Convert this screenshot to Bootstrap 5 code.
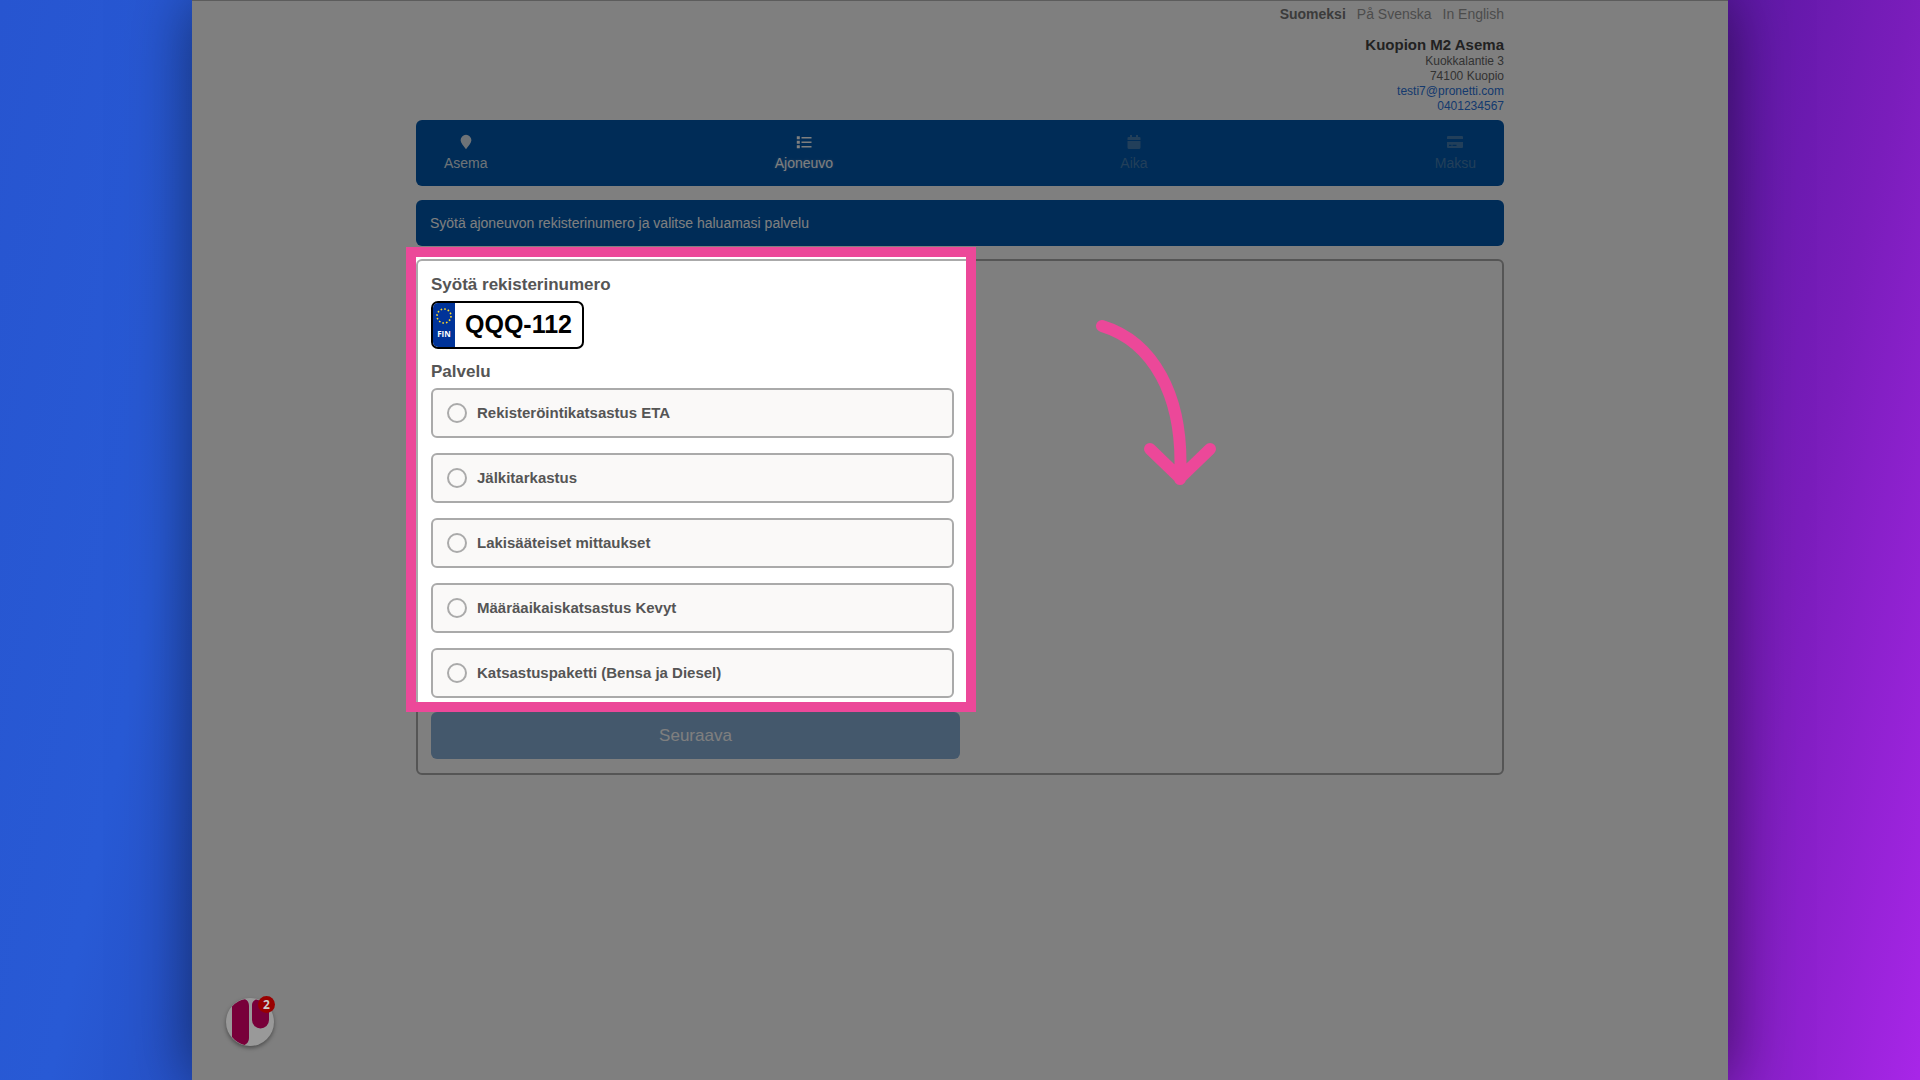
<!DOCTYPE html>
<html lang="fi">
<head>
<meta charset="utf-8">
<meta name="viewport" content="width=device-width, initial-scale=1">
<title>Kuopion M2 Asema – ajanvaraus</title>
<link href="https://cdn.jsdelivr.net/npm/bootstrap@5.3.0/dist/css/bootstrap.min.css" rel="stylesheet">
<style>
  body { font-family: "Liberation Sans", Arial, sans-serif; color: #555; font-size: 14px; background: linear-gradient(102deg, #2755d0 0%, #285ad5 13%, #2448b8 26%, #5a18a3 80%, #7a1dbb 89%, #a826e8 100%); }
  a { text-decoration: none; }
  .booking-stage { width: 80%; background: #fff; box-shadow: 0 0 60px rgba(0,0,0,.5); border-top: 1px solid #5c5c5c; }
  .booking-main { max-width: 1088px; }
  .lang-nav { line-height: 20px; padding-top: 3px; gap: 11px; }
  .lang-nav a { color: #999; }
  .lang-nav a.active { color: #777; }
  .station-info { font-size: 12px; line-height: 15px; margin: 12px 0 6px; color: #666; }
  .station-name { font-size: 15px; line-height: 18px; color: #444; }
  .station-info a { color: #2a74dc; }
  .brand-bar { background: #0058ae; border-radius: 6px; color: #fff; }
  .steps { padding: 14px 28px; }
  .steps li { line-height: 18px; gap: 4px; height: 38px; }
  .steps svg { width: 16px; height: 16px; fill: currentColor; display: block; }
  .step-done { color: #dde6ef; }
  .step-current { text-shadow: 0 0 3px rgba(255,255,255,.3); }
  .step-off { color: #447fb4; }
  .notice { padding: 13px 14px; line-height: 20px; margin: 14px 0 13px; }
  .booking-form { border: 2px solid #aaa; border-radius: 6px; padding: 14px 13px; }
  .form-side { width: 529px; max-width: 100%; }
  .field-title { font-size: 17px; line-height: 20px; font-weight: 700; margin: 0; }
  .plate { width: 153px; height: 48px; border: 2px solid #000; border-radius: 7px; margin: 6px 0 13px; }
  .plate-eu { width: 22px; background: #039; color: #fff; font: 700 8px/10px "Open Sans", sans-serif; padding: 4px 0; }
  .plate-eu svg { width: 18px; height: 18px; margin-bottom: 4px; }
  .plate input { width: 127px; font-size: 25px; font-weight: 700; color: #000; padding: 0 0 0 10px; }
  .service-list { gap: 15px; margin: 6px 6px 14px 0; }
  .service { height: 50px; border: 2px solid #aaa; border-radius: 6px; background: #faf9f8; padding: 0 14px; gap: 10px; font-size: 15px; font-weight: 700; }
  .service .form-check-input { width: 20px; height: 20px; border: 2px solid #aaa; background-color: transparent; margin: 0; flex: none; }
  .btn-next { height: 47px; border-radius: 6px; font-size: 17px; border: 0; }
  .btn-next:disabled { background: #88b0d8; color: #fff; opacity: 1; }
  .spotlight { inset: -28px -16px -14px -25px; border: 10px solid #ec4899; box-shadow: 0 0 0 3000px rgba(0,0,0,.5); pointer-events: none; z-index: 2; }
  .tour-arrow { left: 665px; top: 58px; width: 134px; height: 170px; z-index: 3; }
  .chat-fab { left: 34px; bottom: 34px; width: 48px; height: 48px; z-index: 3; background: #999; box-shadow: 0 2px 4px rgba(0,0,0,.4); }
  .chat-fab svg { width: 48px; height: 48px; display: block; }
  .chat-count { right: -1px; top: -2px; width: 17px; height: 17px; background: #900; color: #ccc; font: 700 12px/17px "Open Sans", sans-serif; }
</style>
<script src="https://cdn.jsdelivr.net/npm/bootstrap@5.3.0/dist/js/bootstrap.bundle.min.js"></script>
</head>
<body class="min-vh-100">
<div class="booking-stage position-relative overflow-hidden mx-auto min-vh-100">
  <main class="booking-main mx-auto">
    <header class="text-end">
      <nav class="lang-nav d-flex justify-content-end" aria-label="Kieli">
        <a href="#" class="active fw-bold">Suomeksi</a><a href="#">På Svenska</a><a href="#">In English</a>
      </nav>
      <address class="station-info">
        <div class="station-name fw-bold">Kuopion M2 Asema</div>
        <div>Kuokkalantie 3</div>
        <div>74100 Kuopio</div>
        <div><a href="mailto:testi7@pronetti.com">testi7@pronetti.com</a></div>
        <div><a href="tel:0401234567">0401234567</a></div>
      </address>
    </header>

    <ol class="brand-bar steps list-unstyled d-flex justify-content-between mb-0">
      <li class="step-done d-flex flex-column align-items-center"><svg viewBox="0 0 16 16" aria-hidden="true"><path d="M8 15.200C5.500 11.800 2.600 8.800 2.600 6.200a5.400 5.400 0 0 1 10.800 0c0 2.600-2.900 5.600-5.400 9z"/></svg>Asema</li>
      <li class="step-current d-flex flex-column align-items-center"><svg viewBox="0 0 16 16" aria-hidden="true"><path d="M.8 2.200h3v3h-3zM.8 6.700h3v3h-3zM.8 11.200h3v3h-3zM5.500 2.900h10v1.600h-10zM5.500 7.400h10V9h-10zM5.500 11.900h10v1.600h-10z"/></svg>Ajoneuvo</li>
      <li class="step-off d-flex flex-column align-items-center"><svg viewBox="0 0 16 16" aria-hidden="true"><path d="M4 1h2v2h4V1h2v2h1.500A1 1 0 0 1 14.500 4v2h-13V4a1 1 0 0 1 1-1H4zM1.500 7h13v6.500a1.500 1.500 0 0 1-1.500 1.500H3a1.500 1.500 0 0 1-1.500-1.500z"/></svg>Aika</li>
      <li class="step-off d-flex flex-column align-items-center"><svg viewBox="0 0 16 16" aria-hidden="true"><path fill-rule="evenodd" d="M1 2h14a1 1 0 0 1 1 1v2H0V3a1 1 0 0 1 1-1zM0 8h16v5a1 1 0 0 1-1 1H1a1 1 0 0 1-1-1zm2 2.800V12h2.500v-1.200zm3.500 0V12h4v-1.200z"/></svg>Maksu</li>
    </ol>

    <p class="brand-bar notice">Syötä ajoneuvon rekisterinumero ja valitse haluamasi palvelu</p>

    <form class="booking-form position-relative">
      <div class="form-side">
        <div class="position-relative">
          <label class="field-title d-block" for="plate">Syötä rekisterinumero</label>
          <div class="plate d-flex overflow-hidden">
            <div class="plate-eu d-flex flex-column align-items-center"><svg viewBox="0 0 18 18" aria-hidden="true"><circle cx="9" cy="9" r="7" fill="none" stroke="#ffdb29" stroke-width="1.600" stroke-dasharray="1.600 2.065"/></svg>FIN</div>
            <input id="plate" class="border-0 bg-transparent" type="text" value="QQQ-112">
          </div>
          <h2 class="field-title">Palvelu</h2>
          <div class="service-list d-flex flex-column" role="radiogroup" aria-label="Palvelu">
            <label class="service d-flex align-items-center"><input class="form-check-input" type="radio" name="service">Rekisteröintikatsastus ETA</label>
            <label class="service d-flex align-items-center"><input class="form-check-input" type="radio" name="service">Jälkitarkastus</label>
            <label class="service d-flex align-items-center"><input class="form-check-input" type="radio" name="service">Lakisääteiset mittaukset</label>
            <label class="service d-flex align-items-center"><input class="form-check-input" type="radio" name="service">Määräaikaiskatsastus Kevyt</label>
            <label class="service d-flex align-items-center"><input class="form-check-input" type="radio" name="service">Katsastuspaketti (Bensa ja Diesel)</label>
          </div>
          <div class="spotlight position-absolute"></div>
        </div>
        <button class="btn btn-next w-100" type="submit" disabled>Seuraava</button>
      </div>
      <svg class="tour-arrow position-absolute" viewBox="0 0 134 170" fill="none" stroke="#ec4899" stroke-width="12" stroke-linecap="round" stroke-linejoin="round" aria-hidden="true"><path d="M19 7C68 22 102 74 97 160M67 130L97 159L127 130"/></svg>
    </form>
  </main>
  <button class="chat-fab position-absolute rounded-circle border-0 p-0" type="button" aria-label="Avaa chat">
    <svg viewBox="0 0 48 48" aria-hidden="true"><path fill="#78003a" d="M6 8.500Q12 2 19 1.200Q23 3 23 8V40Q23 45 18.500 47Q11 45 6 39zM26 7Q26 3 30 1.500Q38 3 43 10V22a8.500 8.500 0 0 1-17 0z"/></svg>
    <span class="chat-count position-absolute rounded-circle text-center">2</span>
  </button>
</div>
</body>
</html>
